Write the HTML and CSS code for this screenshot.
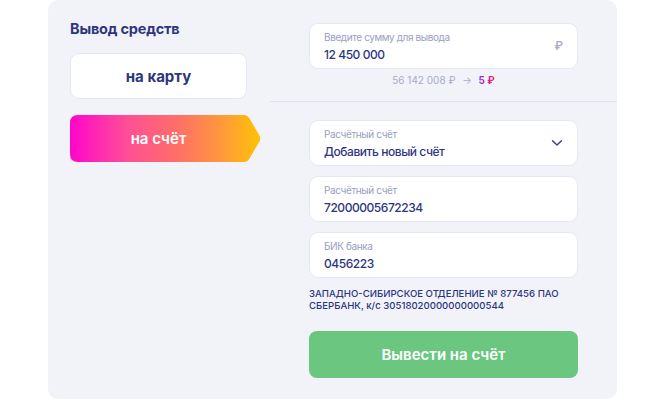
FILE: index.html
```html
<!DOCTYPE html>
<html lang="ru">
<head>
<meta charset="utf-8">
<title>Вывод средств</title>
<link rel="stylesheet" href="styles.css">
</head>
<body>
<div class="panel">
  <div class="side">
    <h1 class="title">Вывод средств</h1>
    <div class="tab">на карту</div>
    <div class="tab tab-active">на счёт</div>
  </div>
  <div class="main">
    <div class="section section-top">
      <div class="field">
        <div class="field-body">
          <div class="label">Введите сумму для вывода</div>
          <div class="value">12 450 000</div>
        </div>
        <span class="rub">₽</span>
      </div>
      <div class="balance">56 142 008 ₽ <span class="arrow">→</span> <span class="fee">5 ₽</span></div>
    </div>
    <div class="section section-bottom">
      <div class="field">
        <div class="field-body">
          <div class="label">Расчётный счёт</div>
          <div class="value">Добавить новый счёт</div>
        </div>
        <svg class="chev" width="12" height="8" viewBox="0 0 12 8"><path d="M1.5 1.8 L6 6 L10.5 1.8" fill="none" stroke="#3b428f" stroke-width="1.5" stroke-linecap="round" stroke-linejoin="round"/></svg>
      </div>
      <div class="field">
        <div class="field-body">
          <div class="label">Расчётный счёт</div>
          <div class="value">72000005672234</div>
        </div>
      </div>
      <div class="field">
        <div class="field-body">
          <div class="label">БИК банка</div>
          <div class="value">0456223</div>
        </div>
      </div>
      <p class="bank">ЗАПАДНО-СИБИРСКОЕ ОТДЕЛЕНИЕ № 877456 ПАО СБЕРБАНК, к/с 30518020000000000544</p>
      <button class="submit">Вывести на счёт</button>
    </div>
  </div>
</div>
</body>
</html>
```
FILE: styles.css
```css
* { box-sizing: border-box; }
html, body { margin: 0; padding: 0; background: #ffffff; }
body {
  font-family: Inter, "Noto Sans", "DejaVu Sans", sans-serif;
  color: #2d3584;
}
.panel {
  margin-left: 48px;
  width: 569px;
  height: 399px;
  background: #f2f3f8;
  border-radius: 10px;
  display: grid;
  grid-template-columns: 222px 1fr;
}
.side {
  padding: 19px 0 0 22px;
  display: flex;
  flex-direction: column;
}
.title {
  margin: 0 0 14px 0;
  font-size: 14.5px;
  line-height: 20px;
  font-weight: 700;
  color: #2e3680;
  letter-spacing: -0.2px;
}
.tab {
  width: 177px;
  height: 46px;
  background: #ffffff;
  border: 1px solid #e5e7f0;
  border-radius: 9px;
  display: flex;
  align-items: center;
  justify-content: center;
  font-size: 15px;
  font-weight: 700;
  color: #2e3680;
  margin-bottom: 16px;
}
.tab-active {
  width: 191px;
  height: 47px;
  border: none;
  border-radius: 0;
  color: #ffffff;
  font-weight: 600;
  padding-right: 14px;
  background: linear-gradient(90deg, #ff05cb 0%, #ff4f95 30%, #ff6d6a 55%, #ff9a3a 80%, #ffc304 100%);
  clip-path: path('M8 0 H174 Q177.5 0 179.5 3.5 L189.5 20.5 Q191 23.5 189.5 26.5 L179.5 43.5 Q177.5 47 174 47 H8 Q0 47 0 39 V8 Q0 0 8 0 Z');
}
.main {
  display: flex;
  flex-direction: column;
}
.section {
  padding: 0 39px;
  display: flex;
  flex-direction: column;
}
.section-top {
  padding-top: 23px;
  padding-bottom: 15px;
  border-bottom: 1px solid #e1e3ec;
}
.section-bottom {
  padding-top: 18px;
  gap: 10px;
}
.field {
  height: 46px;
  background: #ffffff;
  border: 1px solid #e6e8f1;
  border-radius: 9px;
  display: flex;
  align-items: center;
  padding: 0 14px 0 14px;
}
.field-body {
  flex: 1;
  display: flex;
  flex-direction: column;
  gap: 4px;
}
.label {
  font-size: 10px;
  line-height: 12px;
  color: #9a9ec3;
  letter-spacing: -0.4px;
}
.value {
  font-size: 12px;
  line-height: 15px;
  font-weight: 500;
  color: #2d3584;
  letter-spacing: -0.45px;
}
.rub {
  font-size: 12px;
  color: #a6a9c9;
  font-weight: 500;
  margin-top: -2px;
}
.chev { margin-right: 0; }
.balance {
  margin-top: 5px;
  text-align: center;
  font-size: 10px;
  line-height: 12px;
  color: #a7aac9;
}
.arrow { margin: 0 4px; }
.fee {
  font-weight: 700;
  background: linear-gradient(90deg, #8a2fe6, #ff1f58);
  -webkit-background-clip: text;
  background-clip: text;
  color: transparent;
}
.bank {
  margin: 0;
  padding-top: 0;
  font-size: 9.6px;
  line-height: 12px;
  font-weight: 500;
  color: #2d3584;
}
.submit {
  margin-top: 9px;
  height: 47px;
  border: none;
  border-radius: 8px;
  background: #6bc67f;
  color: #ffffff;
  font-family: inherit;
  font-size: 15px;
  font-weight: 600;
}
```
